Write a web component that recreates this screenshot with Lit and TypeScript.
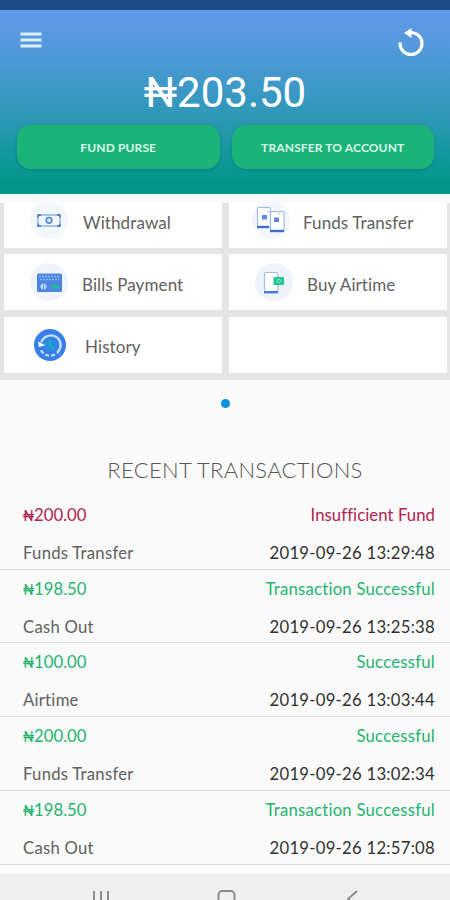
import { LitElement, html, svg, css } from "lit";
import { customElement } from "lit/decorators.js";
import { classMap } from "lit/directives/class-map.js";

const withdrawalIcon = svg`<svg class="ico" viewBox="0 0 40 40">
  <circle cx="20" cy="20" r="19" fill="#f3f7fe"/>
  <rect x="9" y="15" width="22" height="11" rx="1" fill="#f4f9ff" stroke="#8fb2e6" stroke-width="1.3"/>
  <path d="M9 17.500v-2.500h3M28 15H31v2.500M9 23.500v2.500h3M28 26H31v-2.500" fill="none" stroke="#4275c2" stroke-width="1.6"/>
  <circle cx="20" cy="20.300" r="2.900" fill="#d8e7fb" stroke="#5487cd" stroke-width="1.500"/>
</svg>`;

const billsIcon = svg`<svg class="ico" viewBox="0 0 40 40">
  <circle cx="20" cy="20" r="19" fill="#f0f4fe"/>
  <rect x="8" y="11.500" width="25" height="18.500" rx="1.500" fill="#4a87e0"/>
  <path d="M10 14.500h20M11 17.500h19" stroke="#8ab6f0" stroke-width="1.500" stroke-dasharray="2 1"/>
  <circle cx="14.500" cy="24.500" r="3" fill="#b9d5f9"/>
  <path d="M14.500 22v5" stroke="#5c92df"/>
  <rect x="22.500" y="22.500" width="7.500" height="4" rx="1" fill="#20b79d"/>
</svg>`;

const historyIcon = svg`<svg class="ico" viewBox="0 0 40 40">
  <circle cx="20" cy="20" r="16" fill="#367fe8"/>
  <circle cx="20" cy="20" r="6" fill="#258fdd"/>
  <path d="M20 15.500v5l4 3" fill="none" stroke="#22aebd" stroke-width="2"/>
  <path d="M11.200 17.200A10.400 10.400 0 0 1 27.500 12.800" fill="none" stroke="#c4ddff" stroke-width="2.400"/>
  <path d="M27.500 12.800A10.400 10.400 0 0 1 27 28" fill="none" stroke="#c4ddff" stroke-width="2.400"/>
  <path d="M25 29.500A10.400 10.400 0 0 1 10.500 24" fill="none" stroke="#c4ddff" stroke-width="2.400" stroke-dasharray="4 2"/>
  <path d="M8 16.500l1 5.500 6.500-1.800z" fill="#eef5ff"/>
</svg>`;

const fundsIcon = svg`<svg class="ico" viewBox="0 0 40 40">
  <circle cx="20" cy="20" r="19" fill="#f3f6fe"/>
  <rect x="6.500" y="7.500" width="13" height="20" rx="1.500" fill="#fff" stroke="#9dbbe9" stroke-width="1.200"/>
  <path d="M6 27h12" stroke="#3a6fd0" stroke-width="2.400"/>
  <rect x="19.500" y="11.500" width="13.500" height="20" rx="1.500" fill="#fff" stroke="#9dbbe9" stroke-width="1.200"/>
  <path d="M19 31h14" stroke="#3a6fd0" stroke-width="2.400"/>
  <rect x="11" y="15" width="5" height="4.500" fill="#5b8bd9"/>
  <rect x="23" y="17.500" width="5" height="4.500" fill="#5b8bd9"/>
  <path d="M16 12h3M27 14.500l2-1" stroke="#93b7ea"/>
</svg>`;

const airtimeIcon = svg`<svg class="ico" viewBox="0 0 40 40">
  <circle cx="20" cy="20" r="19" fill="#eff3fe"/>
  <rect x="10.500" y="10.500" width="13.500" height="20" rx="1.500" fill="#fff" stroke="#a5bdd6" stroke-width="1.200"/>
  <path d="M10 30.200h14" stroke="#4279d8" stroke-width="2.400"/>
  <rect x="19.500" y="15" width="10.500" height="8" rx="1" fill="#1fc88e"/>
  <circle cx="24.800" cy="19" r="1.700" fill="none" stroke="#83e6c4"/>
</svg>`;

const tiles = [
  { label: "Withdrawal", icon: withdrawalIcon, kind: "withdrawal" },
  { label: "Funds Transfer", icon: fundsIcon, kind: "funds" },
  { label: "Bills Payment", icon: billsIcon, kind: "bills" },
  { label: "Buy Airtime", icon: airtimeIcon, kind: "airtime" },
  { label: "History", icon: historyIcon, kind: "history" },
];

const transactions = [
  { amount: "200.00", status: "Insufficient Fund", type: "Funds Transfer", time: "2019-09-26 13:29:48" },
  { amount: "198.50", status: "Transaction Successful", type: "Cash Out", time: "2019-09-26 13:25:38" },
  { amount: "100.00", status: "Successful", type: "Airtime", time: "2019-09-26 13:03:44" },
  { amount: "200.00", status: "Successful", type: "Funds Transfer", time: "2019-09-26 13:02:34" },
  { amount: "198.50", status: "Transaction Successful", type: "Cash Out", time: "2019-09-26 12:57:08" },
];

@customElement("app-root")
export class AppRoot extends LitElement {
  static styles = css`
    :host {
      display: flex;
      flex-direction: column;
      width: 450px;
      height: 900px;
      overflow: hidden;
      background: #fafafa;
      color: #606060;
      font-family: Lato, "Noto Sans", sans-serif;
      font-variant-ligatures: none;
    }
    * { box-sizing: border-box; }
    .status { height: 10px; flex: none; background: #1c4b87; }
    .header {
      height: 183.500px;
      flex: none;
      background: linear-gradient(#5f98e8 0%, #5699df 16%, #3f98c9 40%, #2c98b3 61%, #10989b 80%, #009688 97%);
    }
    .bar { display: flex; justify-content: space-between; padding: 18px 25px 0 20px; height: 59px; }
    .menu { width: 22px; height: 24px; }
    .refresh { width: 28px; height: 30px; }
    .balance {
      height: 47px;
      line-height: 47px;
      text-align: center;
      font-family: Roboto, sans-serif;
      font-size: 42px;
      color: #fff;
    }
    .actions { display: flex; gap: 12px; padding: 9px 16px 0 17px; }
    .action {
      flex: 1;
      height: 44px;
      border: 0;
      border-radius: 14px;
      background: #1cb378;
      color: #d9f9ea;
      font: 700 12px Lato, sans-serif;
      letter-spacing: 0.130px;
      box-shadow: 0 1px 3px rgba(0, 70, 70, 0.25);
      padding: 0;
    }
    .tiles {
      flex: none;
      display: grid;
      grid-template: 45px 56px 56px / 218px 218px;
      gap: 6.400px 7px;
      margin-top: 9.500px;
      padding: 0 3px 7px 4px;
      background: #e5e5e5;
    }
    .tile { background: #fff; display: flex; align-items: center; font-size: 17px; }
    .ico { width: 40px; height: 40px; flex: none; margin-left: 25px; }
    .label { margin-left: 14px; white-space: nowrap; padding-top: 4px; letter-spacing: 0.100px; }
    .withdrawal .ico, .funds .ico { margin-top: -11px; }
    .withdrawal .label, .funds .label { padding-top: 0; margin-top: -7px; }
    .bills .label { margin-left: 13px; }
    .funds .ico { margin-left: 22px; }
    .funds .label { margin-left: 12px; }
    .airtime .label { margin-left: 13px; }
    .history .ico { margin-left: 26px; }
    .history .label { margin-left: 15px; }
    .dot { width: 9px; height: 9px; border-radius: 50%; background: #0a92dd; margin: 19.500px auto 0; flex: none; }
    .title {
      margin: 48px 0 0 20px;
      height: 28px;
      line-height: 28px;
      text-align: center;
      font-size: 22px;
      font-weight: 300;
      letter-spacing: 0.320px;
      color: #555;
    }
    .list { padding-top: 11.500px; flex: none; }
    .row { height: 73.750px; border-bottom: 1px solid #dcdcdc; padding: 9px 15px 0 23px; }
    .line {
      display: flex;
      justify-content: space-between;
      height: 20px;
      line-height: 20px;
      font-size: 16.700px;
      letter-spacing: 0.260px;
    }
    .line + .line { margin-top: 18px; }
    .state { letter-spacing: 0.240px; }
    .top { color: #1fb470; }
    .failed .top { color: #b02350; }
    .failed .state { letter-spacing: 0.080px; }
    .naira { font: 14px Roboto, sans-serif; line-height: 20px; letter-spacing: 0; }
    .amount { letter-spacing: 0; }
    .time { color: #303030; }
    .nav { flex: none; margin-top: auto; height: 26px; background: #f0f0f0; display: block; }
  `;

  render() {
    return html`
      <div class="status"></div>
      <header class="header">
        <div class="bar">
          <svg class="menu" viewBox="0 0 22 24">
            <path d="M.5 6h21M.5 12h21M.5 18h21" stroke="#d9f1f7" stroke-width="3.200" />
          </svg>
          <svg class="refresh" viewBox="0 0 28 30">
            <path d="M3 15.500a11 11 0 1 0 11-11" fill="none" stroke="#fff" stroke-width="3.200" stroke-linecap="round" />
            <path d="M7 5L14.500 0v10z" fill="#fff" />
          </svg>
        </div>
        <div class="balance">₦203.50</div>
        <div class="actions">
          <button class="action fund">FUND PURSE</button>
          <button class="action transfer">TRANSFER TO ACCOUNT</button>
        </div>
      </header>
      <section class="tiles">
        ${tiles.map((t) => html`<div class="tile ${t.kind}">${t.icon}<span class="label">${t.label}</span></div>`)}
        <div class="tile"></div>
      </section>
      <div class="dot"></div>
      <div class="title">RECENT TRANSACTIONS</div>
      <section class="list">
        ${transactions.map((t) => html`
          <div class=${classMap({ row: true, failed: t.status.startsWith("Insufficient") })}>
            <div class="line top"><span class="amount"><span class="naira">₦</span>${t.amount}</span><span class="state">${t.status}</span></div>
            <div class="line"><span class="type">${t.type}</span><span class="time">${t.time}</span></div>
          </div>`)}
      </section>
      <svg class="nav" viewBox="0 0 450 26">
        <g fill="none" stroke="#8c8c8c" stroke-width="2">
          <path d="M94 17v12M101 17v12M108 17v12" />
          <rect x="218.500" y="17" width="16" height="16" rx="4" />
          <path d="M357 17l-9 8 9 8" />
        </g>
      </svg>
    `;
  }
}
